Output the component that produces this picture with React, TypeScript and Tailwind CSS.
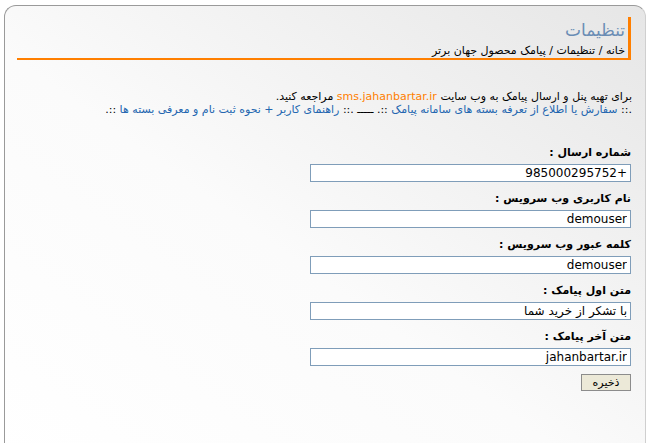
import React from "react";

const fields = [
  { label: "شماره ارسال :", value: "+985000295752" },
  { label: "نام کاربری وب سرویس :", value: "demouser" },
  { label: "کلمه عبور وب سرویس :", value: "demouser" },
  { label: "متن اول پیامک :", value: "با تشکر از خرید شما" },
  { label: "متن آخر پیامک :", value: "jahanbartar.ir" },
];

export default function App() {
  return (
    <div
      dir="rtl"
      className="min-h-[443px] bg-white pt-[5px] px-[4px] text-[11px] text-black"
      style={{ fontFamily: '"DejaVu Sans", Tahoma, sans-serif' }}
    >
      <div className="h-[460px] rounded-t-[12px] border-t border-l border-r border-t-[#9a9a9a] border-l-[#9a9a9a] border-r-[#cfcfcf] bg-linear-to-bl from-[#e6e6e6] via-[#fbfbfb] via-55% to-white">
        {/* header */}
        <div className="mt-[11px] mr-[14px] ml-[12px] h-[43px] border-r-[3px] border-b-[2px] border-[#ff7f00] pr-[3px]">
          <div className="pt-[2px] text-[17px] leading-[22px] text-[#6a8db5]">تنظیمات</div>
          <div className="mt-[3px] leading-[14px]">خانه / تنظیمات / پیامک محصول جهان برتر</div>
        </div>

        {/* intro */}
        <div className="mt-[30px] mr-[13px] leading-[13px]">
          <div>
            برای تهیه پنل و ارسال پیامک به وب سایت{" "}
            <a className="text-[#ff7f00]" href="#">sms.jahanbartar.ir</a> مراجعه کنید.
          </div>
          <div>
            .:: <a className="text-[#2366b0]" href="#">سفارش یا اطلاع از تعرفه بسته های سامانه پیامک</a> ::. ـــــ .::{" "}
            <a className="text-[#2366b0]" href="#">راهنمای کاربر + نحوه ثبت نام و معرفی بسته ها</a> ::.
          </div>
        </div>

        {/* form */}
        <div className="mt-[30px] mr-[14px] flex flex-col items-start">
          {fields.map((f) => (
            <div key={f.label} className="mb-[10px] flex flex-col items-start">
              <div className="font-bold leading-[14px]">{f.label}</div>
              <input
                dir="rtl"
                readOnly
                defaultValue={f.value}
                className="mt-[4px] h-[18px] w-[321px] border border-[#7f9db9] bg-white px-[3px] text-[12px] leading-[16px] text-black outline-none"
                style={{ fontFamily: '"DejaVu Sans", Tahoma, sans-serif' }}
              />
            </div>
          ))}
          <button className="-mt-[2px] h-[17px] w-[50px] border border-[#8c8c8c] bg-[#ece9d8] text-[11px] leading-[14px] text-black">
            ذخیره
          </button>
        </div>
      </div>
    </div>
  );
}
